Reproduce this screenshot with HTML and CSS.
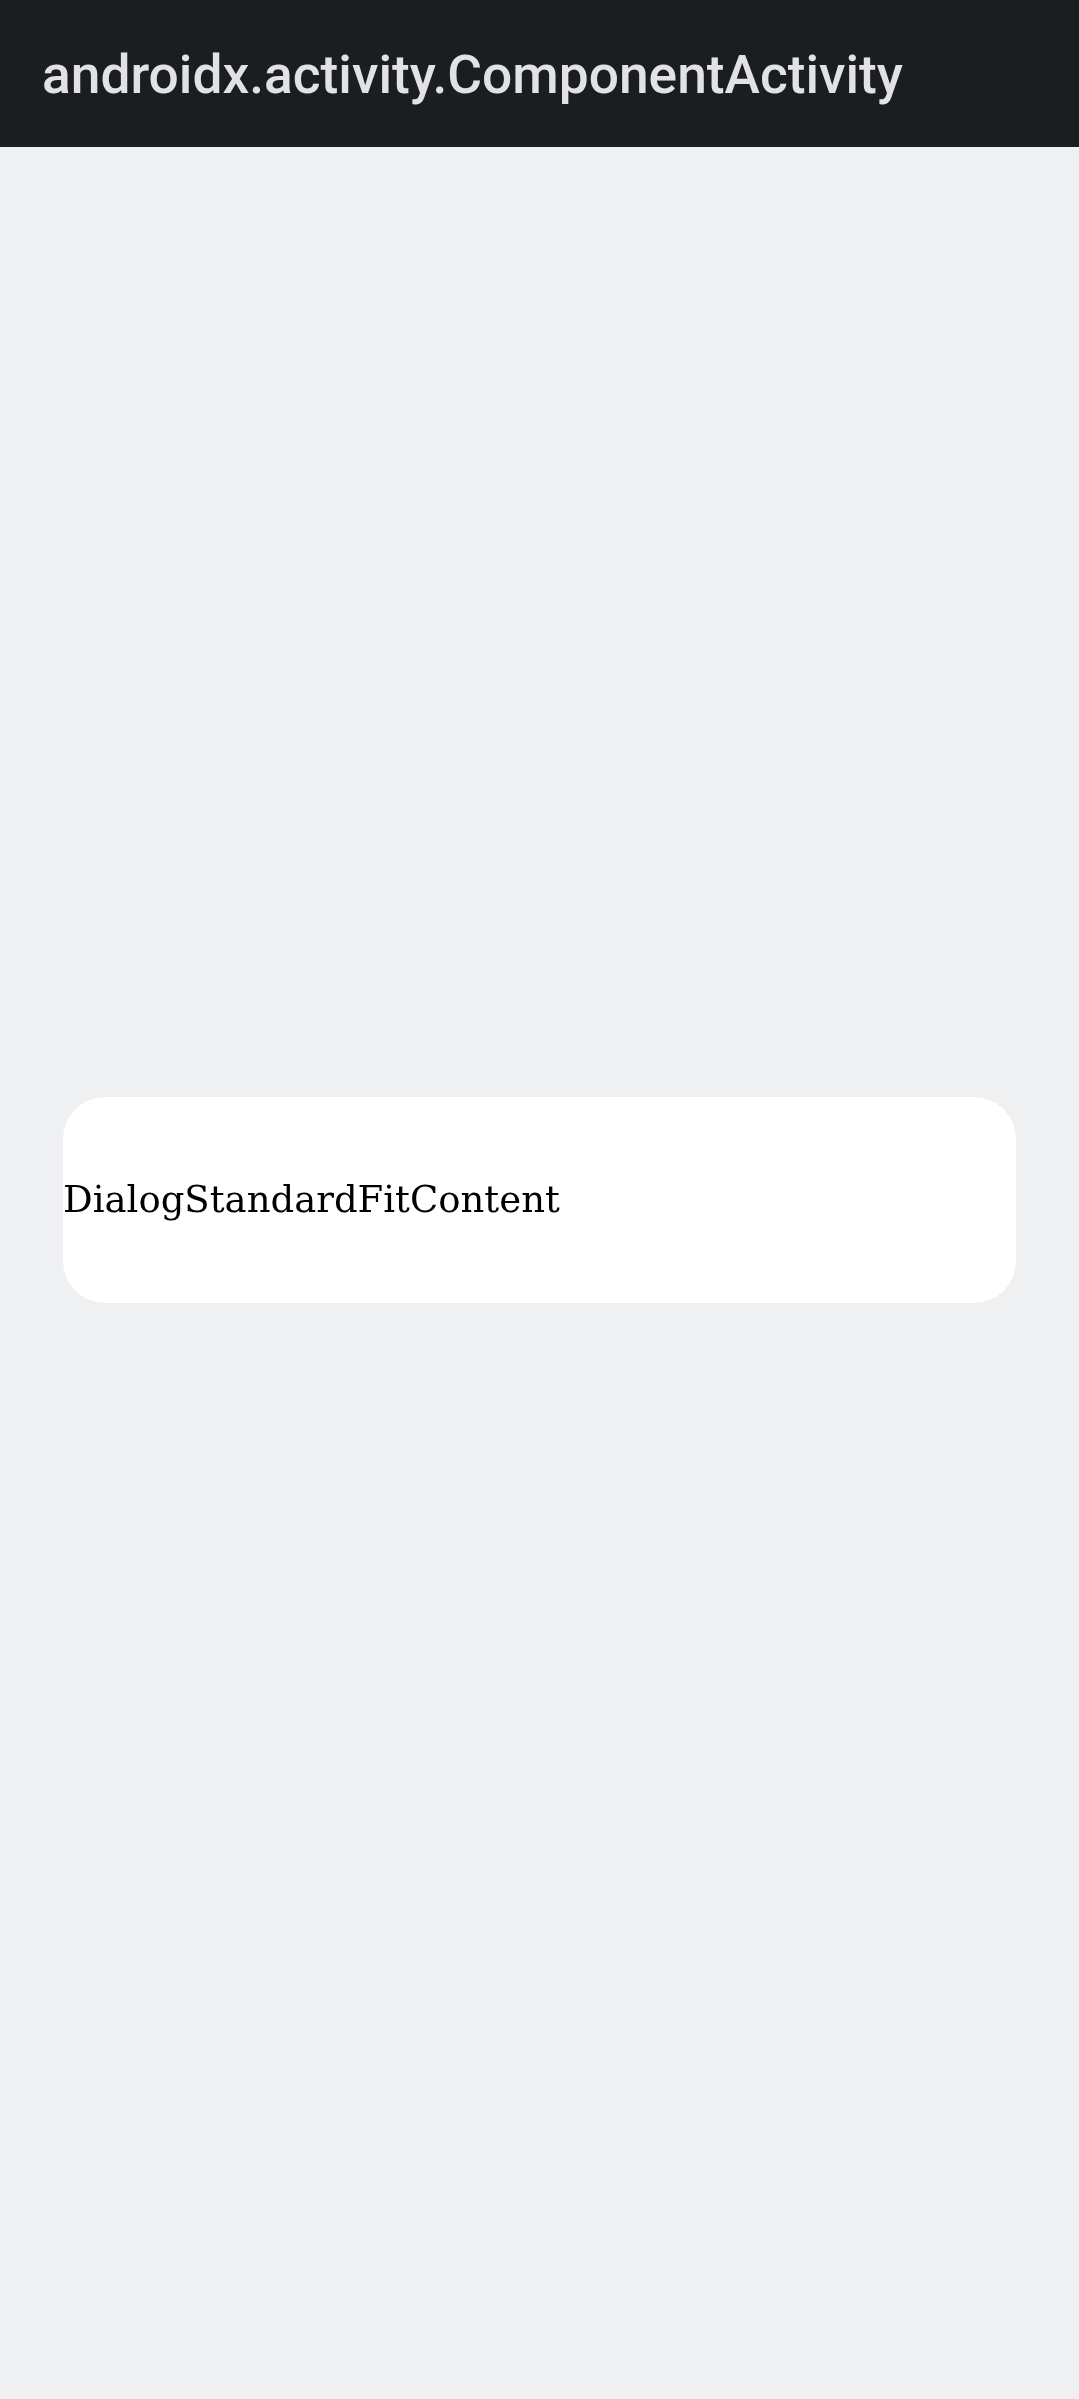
FILE: index.html
```html
<!DOCTYPE html>
<html>
<head>
<meta charset="utf-8">
<link rel="stylesheet" href="styles.css">
</head>
<body>
<header class="toolbar"><span class="toolbar-title">androidx.activity.ComponentActivity</span></header>
<main class="content"></main>
<div class="overlay">
  <div class="dialog"><span class="dialog-text">DialogStandardFitContent</span></div>
</div>
</body>
</html>
```
FILE: styles.css
```css
html, body {
  margin: 0;
  padding: 0;
}
body {
  width: 1079px;
  height: 2399px;
  background: #eff0f2;
  display: flex;
  flex-direction: column;
  overflow: hidden;
}
.toolbar {
  height: 147px;
  flex: none;
  background: #1b1e21;
  display: flex;
  align-items: center;
  padding-left: 42px;
  padding-top: 2px;
  box-sizing: border-box;
}
.toolbar-title {
  font-family: Roboto, sans-serif;
  font-size: 53.3px;
  font-weight: 500;
  color: #e2e2e4;
  white-space: nowrap;
}
.content {
  flex: 1;
}
.overlay {
  position: fixed;
  inset: 0;
  display: flex;
  align-items: center;
  justify-content: center;
}
.dialog {
  width: 953px;
  height: 206px;
  background: #ffffff;
  border-radius: 42px;
  display: flex;
  align-items: center;
}
.dialog-text {
  font-family: "DejaVu Serif", serif;
  font-size: 37px;
  color: #000;
  white-space: nowrap;
}
```
